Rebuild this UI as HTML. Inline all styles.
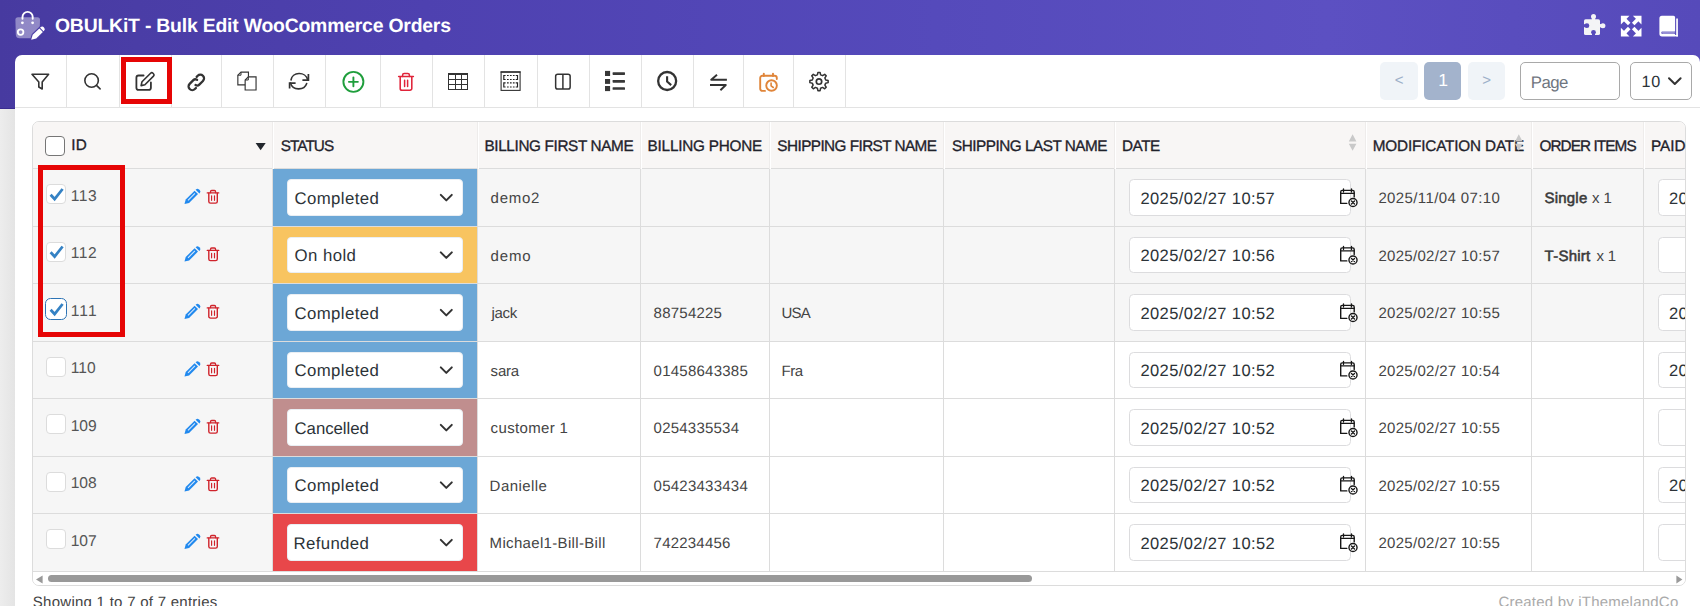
<!DOCTYPE html><html lang="en"><head><meta charset="utf-8"><title>OBULKiT - Bulk Edit WooCommerce Orders</title><style>
*{box-sizing:border-box;margin:0;padding:0}
html,body{width:1700px;height:606px;overflow:hidden}
body{position:relative;background:linear-gradient(90deg,#ededed 0,#e4e4e4 15px);font-family:"Liberation Sans",sans-serif}
.hdr{position:absolute;left:0;top:0;width:1700px;height:109px;background:linear-gradient(90deg,#473aa0 0%,#4a3da6 8%,#4e41b0 25%,#554abb 55%,#5c50c2 78%,#564aba 100%);box-shadow:inset 0 -1px 0 rgba(40,25,120,.4)}
.panel{position:absolute;left:15px;top:55px;width:1685px;height:551px;background:#fff;border-radius:7px 7px 0 0}
.tbar{position:absolute;left:0;top:0;width:1685px;height:53px;border-bottom:1px solid #e3e3e3}
.sep{position:absolute;top:0;width:1px;height:52px;background:#e3e3e3}
.ic{position:absolute;overflow:visible}
.tx{position:absolute;white-space:nowrap;line-height:20px;text-rendering:geometricPrecision}
.redbox{position:absolute;border:5px solid #e60505;box-sizing:content-box}
.pg{position:absolute;top:62px;width:38px;height:38px;border-radius:5px}
.inp{position:absolute;border:1px solid #a9a9a9;border-radius:5px;background:#fff;box-sizing:content-box}
.tbl{position:absolute;border:1px solid #dcdcdc;border-radius:7px;overflow:hidden;box-sizing:content-box;background:#fff}
.tbl>*,.row>*{position:absolute}
.thead{background:#f8f6f5}
.row{left:0;width:100%}
.idc{top:0;background:#f6f6f6}
.stc{top:0}
.sel{position:absolute;left:14px;top:calc(50% - 18.25px);width:176px;height:36.5px;background:#fff;border-radius:4px;border:1px solid #e9eef3}
.dinp{top:calc(50% - 18.1px);width:222px;height:36.2px;background:#fff;border:1px solid #dcdcde;border-radius:4.5px}
.hl{left:0;width:100%;height:1px;background:#dcdcdc}
.vl{width:1px;background:#dcdcdc}
.vh{width:2px;background:linear-gradient(90deg,#eeeceb 50%,#fff 50%);z-index:1}
.sbar{left:0;width:100%;background:#fff}
.thumb{position:absolute;left:15px;top:3px;width:984px;height:7px;border-radius:3.5px;background:#999}
.hcb{position:absolute;width:20px;height:20px;border:1px solid #767676;border-radius:4px;background:#fff}
.cb{position:absolute;width:20px;height:20px;border:1px solid #dcdcdc;border-radius:4px;background:#fff}
.cb.foc{width:22px;height:22px;border:1.5px solid #2d74b5;border-radius:5.5px}
.clipr{overflow:hidden}
</style></head><body>
<div class="hdr">
<svg class="ic" style="left:13px;top:8px" width="34" height="35" viewBox="13 8 34 35" ><path d="M15.4 19.8 a2.6 2.6 0 0 1 2.6 -2.6 H37.4 a2.6 2.6 0 0 1 2.6 2.6 L39.6 34.6 a3.6 3.6 0 0 1 -3.6 3.6 H19.4 a3.6 3.6 0 0 1 -3.6 -3.6 Z" fill="#fff" fill-opacity=".4"/><path d="M22.5 18.8 V17 a5.1 5.1 0 0 1 10.2 0 V18.8" fill="none" stroke="#fff" stroke-width="1.9" stroke-linecap="round"/><circle cx="22.4" cy="22.8" r="1.4" fill="#fff"/><circle cx="32.6" cy="22.8" r="1.4" fill="#fff"/><circle cx="20.6" cy="32.1" r="2.8" fill="none" stroke="#fff" stroke-width="1.8"/><path d="M31.2 39.8 L32.69 34.87 L40.45 27.35 A2.5 2.5 0 0 1 43.93 30.95 L36.17 38.47 Z" fill="#4a3ca4" stroke="#4a3ca4" stroke-width="2.2" stroke-linejoin="round"/><path d="M31.2 39.8 L32.69 34.87 L39.37 28.40 L42.85 32.00 L36.17 38.47 Z" fill="#fff"/><path d="M40.09 27.70 L40.45 27.35 A2.5 2.5 0 0 1 43.93 30.95 L43.57 31.30 Z" fill="#fff"/></svg>
<svg class="ic" style="left:1581px;top:11px" width="27" height="27" viewBox="1581 11 27 27" ><g fill="#f4f4f6"><rect x="1584" y="19.2" width="16" height="15.8" rx="1.6"/><circle cx="1593.5" cy="16.4" r="2.5"/><rect x="1591.9" y="16.4" width="3.2" height="4"/><circle cx="1602.9" cy="25.7" r="2.5"/><rect x="1599" y="24.1" width="4" height="3.2"/></g><g fill="#574bbb"><circle cx="1586.9" cy="25.7" r="2.4"/><rect x="1583" y="24.2" width="3.9" height="3"/><circle cx="1593.5" cy="32.3" r="2.4"/><rect x="1592" y="32.3" width="3" height="3.5"/></g></svg>
<svg class="ic" style="left:1618px;top:13px" width="26" height="26" viewBox="1618 13 26 26" ><path d="M1620.9 15.8 h8.6 l-8.6 8.6 Z" fill="#fff"/><path d="M1623.9 18.8 L1629.20 24.10" stroke="#fff" stroke-width="3.6" fill="none"/><path d="M1641.5 15.8 h-8.6 l8.6 8.6 Z" fill="#fff"/><path d="M1638.5 18.8 L1633.20 24.10" stroke="#fff" stroke-width="3.6" fill="none"/><path d="M1620.9 36.4 h8.6 l-8.6 -8.6 Z" fill="#fff"/><path d="M1623.9 33.4 L1629.20 28.10" stroke="#fff" stroke-width="3.6" fill="none"/><path d="M1641.5 36.4 h-8.6 l8.6 -8.6 Z" fill="#fff"/><path d="M1638.5 33.4 L1633.20 28.10" stroke="#fff" stroke-width="3.6" fill="none"/></svg>
<svg class="ic" style="left:1657px;top:13px" width="24" height="26" viewBox="1657 13 24 26" ><path d="M1661.9 15.7 H1673.5 a1.6 1.6 0 0 1 1.6 1.6 V31.4 H1662.6 a1.3 1.3 0 0 0 0 2.6 H1675.1 V36.4 H1662 a2.6 2.6 0 0 1 -2.6 -2.6 V18.2 a2.5 2.5 0 0 1 2.5 -2.5 Z" fill="#fff"/><rect x="1662" y="31.6" width="13" height="2.3" rx="1.1" fill="#fff" fill-opacity=".38"/><path d="M1677.05 18.4 V36.4" fill="none" stroke="#fff" stroke-width="1.7"/><rect x="1675" y="35" width="2.9" height="1.4" fill="#fff"/></svg>
</div>
<div class="panel">
<div class="tbar">
<i class="sep" style="left:51px"></i>
<i class="sep" style="left:104px"></i>
<i class="sep" style="left:156px"></i>
<i class="sep" style="left:206px"></i>
<i class="sep" style="left:258px"></i>
<i class="sep" style="left:310px"></i>
<i class="sep" style="left:365px"></i>
<i class="sep" style="left:417px"></i>
<i class="sep" style="left:469px"></i>
<i class="sep" style="left:522px"></i>
<i class="sep" style="left:574px"></i>
<i class="sep" style="left:626px"></i>
<i class="sep" style="left:678px"></i>
<i class="sep" style="left:728px"></i>
<i class="sep" style="left:778px"></i>
<i class="sep" style="left:830px"></i>
</div>
</div>
<svg class="ic" style="left:29px;top:71px" width="23" height="21" viewBox="29 71 23 21" ><path d="M32 74.3 H48.6 L42.2 82 V89 L38.8 87 V82 Z" fill="none" stroke="#333" stroke-width="1.6" stroke-linecap="round" stroke-linejoin="round" /></svg>
<svg class="ic" style="left:82px;top:71px" width="21" height="21" viewBox="82 71 21 21" ><circle cx="91.6" cy="80.5" r="6.75" fill="none" stroke="#333" stroke-width="1.6"/><path d="M96.5 85.4 L100.1 88.9" fill="none" stroke="#333" stroke-width="1.6" stroke-linecap="round" stroke-linejoin="round" /></svg>
<svg class="ic" style="left:133px;top:70px" width="24" height="23" viewBox="133 70 24 23" ><path d="M143.6 75.5 H138.6 a2.2 2.2 0 0 0 -2.2 2.2 V87.7 a2.2 2.2 0 0 0 2.2 2.2 H148.7 a2.2 2.2 0 0 0 2.2 -2.2 V82.4" fill="none" stroke="#333" stroke-width="1.8" stroke-linecap="round" stroke-linejoin="round" /><path d="M142 81.8 L150.6 73.2 a1.7 1.7 0 0 1 2.4 0 l0.5 .5 a1.7 1.7 0 0 1 0 2.4 L144.9 84.7 L141.1 85.6 Z" fill="none" stroke="#333" stroke-width="1.6" stroke-linecap="round" stroke-linejoin="round" /></svg>
<svg class="ic" style="left:185px;top:71px" width="23" height="23" viewBox="185 71 23 23" ><g transform="translate(196.3 82.4) rotate(-45)" fill="none" stroke="#333" stroke-width="2.3" stroke-linecap="round"><path d="M2.4 -1.3 Q1.8 -3.7 -0.5 -3.7 H-5.7 A3.7 3.7 0 0 0 -5.7 3.7 H-4.2"/><path d="M2.4 -1.3 Q1.8 -3.7 -0.5 -3.7 H-5.7 A3.7 3.7 0 0 0 -5.7 3.7 H-4.2" transform="rotate(180)"/></g></svg>
<svg class="ic" style="left:234px;top:69px" width="25" height="24" viewBox="234 69 25 24" ><path d="M241 72.05 H248.45 V84.85 H237.85 V75.2 Z" fill="#fff" stroke="#333" stroke-width="1.15" stroke-linejoin="miter"/><path d="M237.85 75.2 H241 V72.05" fill="none" stroke="#333" stroke-width="1"/><path d="M248.3 76.85 H256.05 V89.95 H245.15 V80 Z" fill="#fff" stroke="#333" stroke-width="1.15" stroke-linejoin="miter"/><path d="M245.15 80 H248.3 V76.85" fill="none" stroke="#333" stroke-width="1"/></svg>
<svg class="ic" style="left:287px;top:71px" width="25" height="21" viewBox="287 71 25 21" ><path d="M291 80 A8.4 7.6 0 0 1 307.5 79.4" fill="none" stroke="#333" stroke-width="1.6" stroke-linecap="round" stroke-linejoin="round" /><path d="M308.4 74 V80.1 H302.4" fill="none" stroke="#333" stroke-width="1.7" stroke-linejoin="miter"/><path d="M306.7 83.5 A8.4 7.6 0 0 1 290.5 83.1" fill="none" stroke="#333" stroke-width="1.6" stroke-linecap="round" stroke-linejoin="round" /><path d="M289.6 88.6 V83.1 H295.6" fill="none" stroke="#333" stroke-width="1.7" stroke-linejoin="miter"/></svg>
<svg class="ic" style="left:340px;top:69px" width="27" height="26" viewBox="340 69 27 26" ><circle cx="353.4" cy="81.85" r="10" fill="none" stroke="#1f9e3c" stroke-width="1.9"/><path d="M348.9 81.85 H357.9 M353.4 77.35 V86.35" fill="none" stroke="#1f9e3c" stroke-width="1.9" stroke-linecap="round" stroke-linejoin="round" /></svg>
<svg class="ic" style="left:396px;top:70px" width="20" height="23" viewBox="396 70 20 23" ><path d="M398.6 76.6 H413.4" fill="none" stroke="#e0243a" stroke-width="1.5" stroke-linecap="round" stroke-linejoin="round" /><path d="M402.6 76.4 V75 a1.6 1.6 0 0 1 1.6 -1.6 H407.8 a1.6 1.6 0 0 1 1.6 1.6 V76.4" fill="none" stroke="#e0243a" stroke-width="1.5" stroke-linecap="round" stroke-linejoin="round" /><path d="M400.2 76.8 V88.4 a1.8 1.8 0 0 0 1.8 1.8 H410 a1.8 1.8 0 0 0 1.8 -1.8 V76.8" fill="none" stroke="#e0243a" stroke-width="1.55" stroke-linecap="round" stroke-linejoin="round" /><path d="M404.6 80.2 V86.6 M407.6 80.2 V86.6" fill="none" stroke="#e0243a" stroke-width="1.5" stroke-linecap="round" stroke-linejoin="round" /></svg>
<svg class="ic" style="left:446px;top:70px" width="25" height="22" viewBox="446 70 25 22" ><g fill="#333" shape-rendering="crispEdges"><rect x="448" y="73" width="20" height="2"/><rect x="448" y="73" width="1" height="17"/><rect x="467" y="73" width="1" height="17"/><rect x="455" y="75" width="1" height="15"/><rect x="461" y="75" width="1" height="15"/><rect x="448" y="79" width="20" height="1"/><rect x="448" y="84" width="20" height="1"/><rect x="448" y="89" width="20" height="1"/></g></svg>
<svg class="ic" style="left:498px;top:69px" width="25" height="24" viewBox="498 69 25 24" ><rect x="501.1" y="72" width="19" height="18.4" fill="none" stroke="#333" stroke-width="1.1"/><path d="M500.6 72 H520.6" stroke="#333" stroke-width="1.5"/><g fill="none" stroke="#222" stroke-width="1.15"><path d="M505.6 75.5 H503.8 V79.5 H505.6 M515.7 75.5 H517.5 V79.5 H515.7"/><path d="M507.0 75.5 H514.6 M507.0 79.5 H514.6" stroke-dasharray="1.7 1.25"/><path d="M505.6 82.8 H503.8 V87.0 H505.6 M515.7 82.8 H517.5 V87.0 H515.7"/><path d="M507.0 82.8 H514.6 M507.0 87.0 H514.6" stroke-dasharray="1.7 1.25"/></g></svg>
<svg class="ic" style="left:552px;top:71px" width="21" height="21" viewBox="552 71 21 21" ><rect x="555.65" y="74.15" width="14.5" height="14.9" rx="2.1" fill="none" stroke="#333" stroke-width="1.5"/><path d="M562.9 74.2 V89" stroke="#333" stroke-width="1.5"/></svg>
<svg class="ic" style="left:602px;top:68px" width="26" height="26" viewBox="602 68 26 26" ><rect x="605" y="70.9" width="5.1" height="5.1" fill="#383838"/><rect x="612.6" y="72.2" width="12.4" height="2.7" rx="0.6" fill="#383838"/><rect x="605" y="79" width="5.1" height="4.9" fill="#383838"/><rect x="612.6" y="80" width="12.4" height="2.7" rx="0.6" fill="#383838"/><rect x="605" y="86" width="5.1" height="5.1" fill="#383838"/><rect x="612.6" y="87.2" width="12.4" height="2.6" rx="0.6" fill="#383838"/></svg>
<svg class="ic" style="left:655px;top:69px" width="24" height="24" viewBox="655 69 24 24" ><circle cx="667.15" cy="81" r="9" fill="none" stroke="#333" stroke-width="2.3"/><path d="M667.1 76.2 V81.5 L671.2 85.1" fill="none" stroke="#333" stroke-width="2.1" stroke-linejoin="miter"/></svg>
<svg class="ic" style="left:707px;top:71px" width="23" height="22" viewBox="707 71 23 22" ><path d="M726.9 79.8 H711.2 L717 74.8 M710 85.05 H725.8 L720.4 90.3" fill="none" stroke="#333" stroke-width="1.9" stroke-linejoin="round" stroke-linecap="butt"/></svg>
<svg class="ic" style="left:756px;top:70px" width="24" height="24" viewBox="756 70 24 24" ><path d="M765 90.9 H762.4 a2.2 2.2 0 0 1 -2.2 -2.2 V78 a2.2 2.2 0 0 1 2.2 -2.2 H774.6 a2.2 2.2 0 0 1 2.2 2.2 V79" fill="none" stroke="#e0853a" stroke-width="1.9" stroke-linecap="round" stroke-linejoin="round" /><path d="M763.8 73.6 V76 M773 73.6 V76" fill="none" stroke="#e0853a" stroke-width="1.9" stroke-linecap="round" stroke-linejoin="round" /><circle cx="771.55" cy="85.5" r="5.3" fill="none" stroke="#e0853a" stroke-width="1.9"/><path d="M771.1 83 V85.9 L773.3 87.5" fill="none" stroke="#e0853a" stroke-width="1.6" stroke-linecap="round" stroke-linejoin="round" /></svg>
<svg class="ic" style="left:807px;top:69px" width="24" height="25" viewBox="807 69 24 25" ><path d="M817.92 72.41 L820.08 72.41 L820.61 74.84 L822.61 75.67 L824.70 74.33 L826.22 75.85 L824.88 77.94 L825.71 79.94 L828.14 80.47 L828.14 82.63 L825.71 83.16 L824.88 85.16 L826.22 87.25 L824.70 88.77 L822.61 87.43 L820.61 88.26 L820.08 90.69 L817.92 90.69 L817.39 88.26 L815.39 87.43 L813.30 88.77 L811.78 87.25 L813.12 85.16 L812.29 83.16 L809.86 82.63 L809.86 80.47 L812.29 79.94 L813.12 77.94 L811.78 75.85 L813.30 74.33 L815.39 75.67 L817.39 74.84 Z" fill="none" stroke="#333" stroke-width="1.5" stroke-linecap="round" stroke-linejoin="round" /><circle cx="819.0" cy="81.55" r="2.7" fill="none" stroke="#333" stroke-width="1.7"/></svg>
<div class="redbox" style="left:121px;top:57px;width:41px;height:37px"></div>
<div class="pg" style="left:1380px;background:#f0f4f8"></div>
<div class="pg" style="left:1424px;width:37px;background:#a3b3cc"></div>
<div class="pg" style="left:1468px;width:37px;background:#f0f4f8"></div>
<div class="inp" style="left:1520px;top:62px;width:98px;height:36px"></div>
<div class="inp" style="left:1630px;top:62px;width:60px;height:36px"></div>
<svg class="ic" style="left:1666px;top:75px" width="18" height="12" viewBox="1666 75 18 12" ><path d="M1669 78.3 L1674.8 84 L1680.6 78.3" fill="none" stroke="#333" stroke-width="2" stroke-linecap="round" stroke-linejoin="round"/></svg>
<div class="tbl" style="left:32px;top:121px;width:1652px;height:463px">
<div class="thead" style="left:0;top:0;width:1652px;height:46px"></div>
<div class="row" style="top:47px;height:57px;background:#f6f6f6">
<div class="idc" style="left:0;width:239px;height:57px"></div>
<div class="stc" style="left:240px;width:204px;height:57px;background:#6ca7d6"><div class="sel"></div></div>
<div class="dinp" style="left:1096px"></div>
<div class="dinp" style="left:1625px;width:60px"></div>
</div>
<div class="row" style="top:105px;height:56px;background:#f6f6f6">
<div class="idc" style="left:0;width:239px;height:56px"></div>
<div class="stc" style="left:240px;width:204px;height:56px;background:#f8c460"><div class="sel"></div></div>
<div class="dinp" style="left:1096px"></div>
<div class="dinp" style="left:1625px;width:60px"></div>
</div>
<div class="row" style="top:162px;height:57px;background:#f6f6f6">
<div class="idc" style="left:0;width:239px;height:57px"></div>
<div class="stc" style="left:240px;width:204px;height:57px;background:#6ca7d6"><div class="sel"></div></div>
<div class="dinp" style="left:1096px"></div>
<div class="dinp" style="left:1625px;width:60px"></div>
</div>
<div class="row" style="top:220px;height:56px;background:#fff">
<div class="idc" style="left:0;width:239px;height:56px"></div>
<div class="stc" style="left:240px;width:204px;height:56px;background:#6ca7d6"><div class="sel"></div></div>
<div class="dinp" style="left:1096px"></div>
<div class="dinp" style="left:1625px;width:60px"></div>
</div>
<div class="row" style="top:277px;height:57px;background:#fff">
<div class="idc" style="left:0;width:239px;height:57px"></div>
<div class="stc" style="left:240px;width:204px;height:57px;background:#c08e8e"><div class="sel"></div></div>
<div class="dinp" style="left:1096px"></div>
<div class="dinp" style="left:1625px;width:60px"></div>
</div>
<div class="row" style="top:335px;height:56px;background:#fff">
<div class="idc" style="left:0;width:239px;height:56px"></div>
<div class="stc" style="left:240px;width:204px;height:56px;background:#6ca7d6"><div class="sel"></div></div>
<div class="dinp" style="left:1096px"></div>
<div class="dinp" style="left:1625px;width:60px"></div>
</div>
<div class="row" style="top:392px;height:57px;background:#fff">
<div class="idc" style="left:0;width:239px;height:57px"></div>
<div class="stc" style="left:240px;width:204px;height:57px;background:#e8474a"><div class="sel"></div></div>
<div class="dinp" style="left:1096px"></div>
<div class="dinp" style="left:1625px;width:60px"></div>
</div>
<i class="hl" style="top:46px"></i>
<i class="hl" style="top:104px"></i>
<i class="hl" style="top:161px"></i>
<i class="hl" style="top:219px"></i>
<i class="hl" style="top:276px"></i>
<i class="hl" style="top:334px"></i>
<i class="hl" style="top:391px"></i>
<i class="hl" style="top:449px"></i>
<i class="vl" style="left:239px;top:46px;height:403px"></i>
<i class="vl vh" style="left:239px;top:0;height:47px"></i>
<i class="vl" style="left:444px;top:46px;height:403px"></i>
<i class="vl vh" style="left:444px;top:0;height:47px"></i>
<i class="vl" style="left:607px;top:46px;height:403px"></i>
<i class="vl vh" style="left:607px;top:0;height:47px"></i>
<i class="vl" style="left:736px;top:46px;height:403px"></i>
<i class="vl vh" style="left:736px;top:0;height:47px"></i>
<i class="vl" style="left:910px;top:46px;height:403px"></i>
<i class="vl vh" style="left:910px;top:0;height:47px"></i>
<i class="vl" style="left:1081px;top:46px;height:403px"></i>
<i class="vl vh" style="left:1081px;top:0;height:47px"></i>
<i class="vl" style="left:1332px;top:46px;height:403px"></i>
<i class="vl vh" style="left:1332px;top:0;height:47px"></i>
<i class="vl" style="left:1498px;top:46px;height:403px"></i>
<i class="vl vh" style="left:1498px;top:0;height:47px"></i>
<i class="vl" style="left:1610px;top:46px;height:403px"></i>
<i class="vl vh" style="left:1610px;top:0;height:47px"></i>
<div class="sbar" style="top:450px;height:13px"><div class="thumb"></div><svg style="position:absolute;left:3px;top:3px" width="8" height="9" viewBox="0 0 8 9"><path d="M0 4.5 L6.6 0.4 V8.6 Z" fill="#999"/></svg><svg style="position:absolute;left:1643px;top:3px" width="8" height="9" viewBox="0 0 8 9"><path d="M6.4 4.5 L0.4 0.6 V8.4 Z" fill="#9a9a9a"/></svg></div>
</div>
<div class="hcb" style="left:45px;top:136px"></div>
<svg class="ic" style="left:253px;top:140px" width="15" height="13" viewBox="253 140 15 13" ><path d="M255.6 143 H265.7 L260.65 150.2 Z" fill="#22262c"/></svg>
<svg class="ic" style="left:1346px;top:132px;z-index:3" width="13" height="21" viewBox="1346 132 13 21" ><path d="M1348.8 141.6 L1352.6 134.2 L1356.3999999999999 141.6 Z M1348.8 143.8 L1352.6 150.8 L1356.3999999999999 143.8 Z" fill="#c9c9c9"/></svg>
<svg class="ic" style="left:1513px;top:132px;z-index:3" width="12" height="21" viewBox="1513 132 12 21" ><path d="M1515 141.6 L1518.8 134.2 L1522.6 141.6 Z M1515 143.8 L1518.8 150.8 L1522.6 143.8 Z" fill="#c9c9c9"/></svg>
<div class="cb" style="left:46px;top:184px"></div>
<svg class="ic" style="left:47px;top:185px" width="19" height="19" viewBox="47 185 19 19" ><path d="M50.6 194.8 L54.6 199.0 L62.6 189.0" fill="none" stroke="#3582c4" stroke-width="2.8" stroke-linejoin="miter"/></svg>
<svg class="ic" style="left:182px;top:186px" width="21" height="21" viewBox="182 186 21 21" ><path d="M184.5 204.0 L185.7 199.6 L194.6 190.7 L198 194.1 L189.1 203.0 Z" fill="#2189ee"/><path d="M188 200.3 L194.9 193.4" stroke="#d6e8fc" stroke-width="1.1" fill="none"/><path d="M195.6 189.7 l0.3 -0.3 a2.2 2.2 0 0 1 3.1 0 l0.7 0.7 a2.2 2.2 0 0 1 0 3.1 l-0.3 .3 Z" fill="#2189ee"/></svg>
<svg class="ic" style="left:205px;top:187px" width="17" height="20" viewBox="205 187 17 20" ><path d="M207.3 192.9 H218.7" fill="none" stroke="#cf232b" stroke-width="1.4" stroke-linecap="round" stroke-linejoin="round" /><path d="M210.5 192.7 V191.7 a1.2 1.2 0 0 1 1.2 -1.2 H214.4 a1.2 1.2 0 0 1 1.2 1.2 V192.7" fill="none" stroke="#cf232b" stroke-width="1.3" stroke-linecap="round" stroke-linejoin="round" /><path d="M208.8 193.1 V201.4 a1.7 1.7 0 0 0 1.7 1.7 H215.6 a1.7 1.7 0 0 0 1.7 -1.7 V193.1" fill="none" stroke="#cf232b" stroke-width="1.4" stroke-linecap="round" stroke-linejoin="round" /><path d="M211.6 195.7 V200.3 M214.5 195.7 V200.3" fill="none" stroke="#cf232b" stroke-width="1.15" stroke-linecap="round" stroke-linejoin="round" /></svg>
<svg class="ic" style="left:438px;top:191px" width="17" height="14" viewBox="438 191 17 14" ><path d="M440.8 194.9 L446.3 200.4 L451.8 194.9" fill="none" stroke="#333" stroke-width="2" stroke-linecap="round" stroke-linejoin="round"/></svg>
<svg class="ic" style="left:1338px;top:185px" width="22" height="25" viewBox="1338 185 22 25" ><path d="M1346.8 203.4 H1340.7 V191.9 a1.5 1.5 0 0 1 1.5 -1.5 H1352.7 a1.5 1.5 0 0 1 1.5 1.5 V196.9" fill="none" stroke="#161616" stroke-width="1.4" stroke-linecap="round" stroke-linejoin="round" /><path d="M1340.7 193.4 H1354.2" fill="none" stroke="#161616" stroke-width="1.3" stroke-linecap="round" stroke-linejoin="round" /><path d="M1343.5 188.8 V192.1 M1351.5 188.8 V192.1" fill="none" stroke="#161616" stroke-width="1.3" stroke-linecap="round" stroke-linejoin="round" /><circle cx="1353" cy="202.5" r="4.05" fill="#fff" fill-opacity=".6" stroke="#161616" stroke-width="1.4"/><path d="M1351.5 201.0 L1354.5 204.0 M1354.5 201.0 L1351.5 204.0" fill="none" stroke="#161616" stroke-width="1.3" stroke-linecap="round" stroke-linejoin="round" /></svg>
<div class="cb" style="left:46px;top:242px"></div>
<svg class="ic" style="left:47px;top:242px" width="19" height="19" viewBox="47 242 19 19" ><path d="M50.6 252.3 L54.6 256.5 L62.6 246.5" fill="none" stroke="#3582c4" stroke-width="2.8" stroke-linejoin="miter"/></svg>
<svg class="ic" style="left:182px;top:244px" width="21" height="20" viewBox="182 244 21 20" ><path d="M184.5 261.5 L185.7 257.1 L194.6 248.2 L198 251.6 L189.1 260.5 Z" fill="#2189ee"/><path d="M188 257.8 L194.9 250.9" stroke="#d6e8fc" stroke-width="1.1" fill="none"/><path d="M195.6 247.2 l0.3 -0.3 a2.2 2.2 0 0 1 3.1 0 l0.7 0.7 a2.2 2.2 0 0 1 0 3.1 l-0.3 .3 Z" fill="#2189ee"/></svg>
<svg class="ic" style="left:205px;top:245px" width="17" height="19" viewBox="205 245 17 19" ><path d="M207.3 250.4 H218.7" fill="none" stroke="#cf232b" stroke-width="1.4" stroke-linecap="round" stroke-linejoin="round" /><path d="M210.5 250.2 V249.2 a1.2 1.2 0 0 1 1.2 -1.2 H214.4 a1.2 1.2 0 0 1 1.2 1.2 V250.2" fill="none" stroke="#cf232b" stroke-width="1.3" stroke-linecap="round" stroke-linejoin="round" /><path d="M208.8 250.6 V258.9 a1.7 1.7 0 0 0 1.7 1.7 H215.6 a1.7 1.7 0 0 0 1.7 -1.7 V250.6" fill="none" stroke="#cf232b" stroke-width="1.4" stroke-linecap="round" stroke-linejoin="round" /><path d="M211.6 253.2 V257.8 M214.5 253.2 V257.8" fill="none" stroke="#cf232b" stroke-width="1.15" stroke-linecap="round" stroke-linejoin="round" /></svg>
<svg class="ic" style="left:438px;top:249px" width="17" height="13" viewBox="438 249 17 13" ><path d="M440.8 252.4 L446.3 257.9 L451.8 252.4" fill="none" stroke="#333" stroke-width="2" stroke-linecap="round" stroke-linejoin="round"/></svg>
<svg class="ic" style="left:1338px;top:243px" width="22" height="24" viewBox="1338 243 22 24" ><path d="M1346.8 260.9 H1340.7 V249.4 a1.5 1.5 0 0 1 1.5 -1.5 H1352.7 a1.5 1.5 0 0 1 1.5 1.5 V254.4" fill="none" stroke="#161616" stroke-width="1.4" stroke-linecap="round" stroke-linejoin="round" /><path d="M1340.7 250.9 H1354.2" fill="none" stroke="#161616" stroke-width="1.3" stroke-linecap="round" stroke-linejoin="round" /><path d="M1343.5 246.3 V249.6 M1351.5 246.3 V249.6" fill="none" stroke="#161616" stroke-width="1.3" stroke-linecap="round" stroke-linejoin="round" /><circle cx="1353" cy="260.0" r="4.05" fill="#fff" fill-opacity=".6" stroke="#161616" stroke-width="1.4"/><path d="M1351.5 258.5 L1354.5 261.5 M1354.5 258.5 L1351.5 261.5" fill="none" stroke="#161616" stroke-width="1.3" stroke-linecap="round" stroke-linejoin="round" /></svg>
<div class="cb foc" style="left:45px;top:298px"></div>
<svg class="ic" style="left:47px;top:300px" width="19" height="19" viewBox="47 300 19 19" ><path d="M50.6 309.8 L54.6 314.0 L62.6 304.0" fill="none" stroke="#3582c4" stroke-width="2.8" stroke-linejoin="miter"/></svg>
<svg class="ic" style="left:182px;top:301px" width="21" height="21" viewBox="182 301 21 21" ><path d="M184.5 319.0 L185.7 314.6 L194.6 305.7 L198 309.1 L189.1 318.0 Z" fill="#2189ee"/><path d="M188 315.3 L194.9 308.4" stroke="#d6e8fc" stroke-width="1.1" fill="none"/><path d="M195.6 304.7 l0.3 -0.3 a2.2 2.2 0 0 1 3.1 0 l0.7 0.7 a2.2 2.2 0 0 1 0 3.1 l-0.3 .3 Z" fill="#2189ee"/></svg>
<svg class="ic" style="left:205px;top:302px" width="17" height="20" viewBox="205 302 17 20" ><path d="M207.3 307.9 H218.7" fill="none" stroke="#cf232b" stroke-width="1.4" stroke-linecap="round" stroke-linejoin="round" /><path d="M210.5 307.7 V306.7 a1.2 1.2 0 0 1 1.2 -1.2 H214.4 a1.2 1.2 0 0 1 1.2 1.2 V307.7" fill="none" stroke="#cf232b" stroke-width="1.3" stroke-linecap="round" stroke-linejoin="round" /><path d="M208.8 308.1 V316.4 a1.7 1.7 0 0 0 1.7 1.7 H215.6 a1.7 1.7 0 0 0 1.7 -1.7 V308.1" fill="none" stroke="#cf232b" stroke-width="1.4" stroke-linecap="round" stroke-linejoin="round" /><path d="M211.6 310.7 V315.3 M214.5 310.7 V315.3" fill="none" stroke="#cf232b" stroke-width="1.15" stroke-linecap="round" stroke-linejoin="round" /></svg>
<svg class="ic" style="left:438px;top:306px" width="17" height="14" viewBox="438 306 17 14" ><path d="M440.8 309.9 L446.3 315.4 L451.8 309.9" fill="none" stroke="#333" stroke-width="2" stroke-linecap="round" stroke-linejoin="round"/></svg>
<svg class="ic" style="left:1338px;top:300px" width="22" height="25" viewBox="1338 300 22 25" ><path d="M1346.8 318.4 H1340.7 V306.9 a1.5 1.5 0 0 1 1.5 -1.5 H1352.7 a1.5 1.5 0 0 1 1.5 1.5 V311.9" fill="none" stroke="#161616" stroke-width="1.4" stroke-linecap="round" stroke-linejoin="round" /><path d="M1340.7 308.4 H1354.2" fill="none" stroke="#161616" stroke-width="1.3" stroke-linecap="round" stroke-linejoin="round" /><path d="M1343.5 303.8 V307.1 M1351.5 303.8 V307.1" fill="none" stroke="#161616" stroke-width="1.3" stroke-linecap="round" stroke-linejoin="round" /><circle cx="1353" cy="317.5" r="4.05" fill="#fff" fill-opacity=".6" stroke="#161616" stroke-width="1.4"/><path d="M1351.5 316.0 L1354.5 319.0 M1354.5 316.0 L1351.5 319.0" fill="none" stroke="#161616" stroke-width="1.3" stroke-linecap="round" stroke-linejoin="round" /></svg>
<div class="cb" style="left:46px;top:357px"></div>
<svg class="ic" style="left:182px;top:359px" width="21" height="20" viewBox="182 359 21 20" ><path d="M184.5 376.5 L185.7 372.1 L194.6 363.2 L198 366.6 L189.1 375.5 Z" fill="#2189ee"/><path d="M188 372.8 L194.9 365.9" stroke="#d6e8fc" stroke-width="1.1" fill="none"/><path d="M195.6 362.2 l0.3 -0.3 a2.2 2.2 0 0 1 3.1 0 l0.7 0.7 a2.2 2.2 0 0 1 0 3.1 l-0.3 .3 Z" fill="#2189ee"/></svg>
<svg class="ic" style="left:205px;top:360px" width="17" height="19" viewBox="205 360 17 19" ><path d="M207.3 365.4 H218.7" fill="none" stroke="#cf232b" stroke-width="1.4" stroke-linecap="round" stroke-linejoin="round" /><path d="M210.5 365.2 V364.2 a1.2 1.2 0 0 1 1.2 -1.2 H214.4 a1.2 1.2 0 0 1 1.2 1.2 V365.2" fill="none" stroke="#cf232b" stroke-width="1.3" stroke-linecap="round" stroke-linejoin="round" /><path d="M208.8 365.6 V373.9 a1.7 1.7 0 0 0 1.7 1.7 H215.6 a1.7 1.7 0 0 0 1.7 -1.7 V365.6" fill="none" stroke="#cf232b" stroke-width="1.4" stroke-linecap="round" stroke-linejoin="round" /><path d="M211.6 368.2 V372.8 M214.5 368.2 V372.8" fill="none" stroke="#cf232b" stroke-width="1.15" stroke-linecap="round" stroke-linejoin="round" /></svg>
<svg class="ic" style="left:438px;top:364px" width="17" height="13" viewBox="438 364 17 13" ><path d="M440.8 367.4 L446.3 372.9 L451.8 367.4" fill="none" stroke="#333" stroke-width="2" stroke-linecap="round" stroke-linejoin="round"/></svg>
<svg class="ic" style="left:1338px;top:358px" width="22" height="24" viewBox="1338 358 22 24" ><path d="M1346.8 375.9 H1340.7 V364.4 a1.5 1.5 0 0 1 1.5 -1.5 H1352.7 a1.5 1.5 0 0 1 1.5 1.5 V369.4" fill="none" stroke="#161616" stroke-width="1.4" stroke-linecap="round" stroke-linejoin="round" /><path d="M1340.7 365.9 H1354.2" fill="none" stroke="#161616" stroke-width="1.3" stroke-linecap="round" stroke-linejoin="round" /><path d="M1343.5 361.3 V364.6 M1351.5 361.3 V364.6" fill="none" stroke="#161616" stroke-width="1.3" stroke-linecap="round" stroke-linejoin="round" /><circle cx="1353" cy="375.0" r="4.05" fill="#fff" fill-opacity=".6" stroke="#161616" stroke-width="1.4"/><path d="M1351.5 373.5 L1354.5 376.5 M1354.5 373.5 L1351.5 376.5" fill="none" stroke="#161616" stroke-width="1.3" stroke-linecap="round" stroke-linejoin="round" /></svg>
<div class="cb" style="left:46px;top:414px"></div>
<svg class="ic" style="left:182px;top:416px" width="21" height="21" viewBox="182 416 21 21" ><path d="M184.5 434.0 L185.7 429.6 L194.6 420.7 L198 424.1 L189.1 433.0 Z" fill="#2189ee"/><path d="M188 430.3 L194.9 423.4" stroke="#d6e8fc" stroke-width="1.1" fill="none"/><path d="M195.6 419.7 l0.3 -0.3 a2.2 2.2 0 0 1 3.1 0 l0.7 0.7 a2.2 2.2 0 0 1 0 3.1 l-0.3 .3 Z" fill="#2189ee"/></svg>
<svg class="ic" style="left:205px;top:417px" width="17" height="20" viewBox="205 417 17 20" ><path d="M207.3 422.9 H218.7" fill="none" stroke="#cf232b" stroke-width="1.4" stroke-linecap="round" stroke-linejoin="round" /><path d="M210.5 422.7 V421.7 a1.2 1.2 0 0 1 1.2 -1.2 H214.4 a1.2 1.2 0 0 1 1.2 1.2 V422.7" fill="none" stroke="#cf232b" stroke-width="1.3" stroke-linecap="round" stroke-linejoin="round" /><path d="M208.8 423.1 V431.4 a1.7 1.7 0 0 0 1.7 1.7 H215.6 a1.7 1.7 0 0 0 1.7 -1.7 V423.1" fill="none" stroke="#cf232b" stroke-width="1.4" stroke-linecap="round" stroke-linejoin="round" /><path d="M211.6 425.7 V430.3 M214.5 425.7 V430.3" fill="none" stroke="#cf232b" stroke-width="1.15" stroke-linecap="round" stroke-linejoin="round" /></svg>
<svg class="ic" style="left:438px;top:421px" width="17" height="14" viewBox="438 421 17 14" ><path d="M440.8 424.9 L446.3 430.4 L451.8 424.9" fill="none" stroke="#333" stroke-width="2" stroke-linecap="round" stroke-linejoin="round"/></svg>
<svg class="ic" style="left:1338px;top:415px" width="22" height="25" viewBox="1338 415 22 25" ><path d="M1346.8 433.4 H1340.7 V421.9 a1.5 1.5 0 0 1 1.5 -1.5 H1352.7 a1.5 1.5 0 0 1 1.5 1.5 V426.9" fill="none" stroke="#161616" stroke-width="1.4" stroke-linecap="round" stroke-linejoin="round" /><path d="M1340.7 423.4 H1354.2" fill="none" stroke="#161616" stroke-width="1.3" stroke-linecap="round" stroke-linejoin="round" /><path d="M1343.5 418.8 V422.1 M1351.5 418.8 V422.1" fill="none" stroke="#161616" stroke-width="1.3" stroke-linecap="round" stroke-linejoin="round" /><circle cx="1353" cy="432.5" r="4.05" fill="#fff" fill-opacity=".6" stroke="#161616" stroke-width="1.4"/><path d="M1351.5 431.0 L1354.5 434.0 M1354.5 431.0 L1351.5 434.0" fill="none" stroke="#161616" stroke-width="1.3" stroke-linecap="round" stroke-linejoin="round" /></svg>
<div class="cb" style="left:46px;top:472px"></div>
<svg class="ic" style="left:182px;top:474px" width="21" height="20" viewBox="182 474 21 20" ><path d="M184.5 491.5 L185.7 487.1 L194.6 478.2 L198 481.6 L189.1 490.5 Z" fill="#2189ee"/><path d="M188 487.8 L194.9 480.9" stroke="#d6e8fc" stroke-width="1.1" fill="none"/><path d="M195.6 477.2 l0.3 -0.3 a2.2 2.2 0 0 1 3.1 0 l0.7 0.7 a2.2 2.2 0 0 1 0 3.1 l-0.3 .3 Z" fill="#2189ee"/></svg>
<svg class="ic" style="left:205px;top:475px" width="17" height="19" viewBox="205 475 17 19" ><path d="M207.3 480.4 H218.7" fill="none" stroke="#cf232b" stroke-width="1.4" stroke-linecap="round" stroke-linejoin="round" /><path d="M210.5 480.2 V479.2 a1.2 1.2 0 0 1 1.2 -1.2 H214.4 a1.2 1.2 0 0 1 1.2 1.2 V480.2" fill="none" stroke="#cf232b" stroke-width="1.3" stroke-linecap="round" stroke-linejoin="round" /><path d="M208.8 480.6 V488.9 a1.7 1.7 0 0 0 1.7 1.7 H215.6 a1.7 1.7 0 0 0 1.7 -1.7 V480.6" fill="none" stroke="#cf232b" stroke-width="1.4" stroke-linecap="round" stroke-linejoin="round" /><path d="M211.6 483.2 V487.8 M214.5 483.2 V487.8" fill="none" stroke="#cf232b" stroke-width="1.15" stroke-linecap="round" stroke-linejoin="round" /></svg>
<svg class="ic" style="left:438px;top:479px" width="17" height="13" viewBox="438 479 17 13" ><path d="M440.8 482.4 L446.3 487.9 L451.8 482.4" fill="none" stroke="#333" stroke-width="2" stroke-linecap="round" stroke-linejoin="round"/></svg>
<svg class="ic" style="left:1338px;top:473px" width="22" height="24" viewBox="1338 473 22 24" ><path d="M1346.8 490.9 H1340.7 V479.4 a1.5 1.5 0 0 1 1.5 -1.5 H1352.7 a1.5 1.5 0 0 1 1.5 1.5 V484.4" fill="none" stroke="#161616" stroke-width="1.4" stroke-linecap="round" stroke-linejoin="round" /><path d="M1340.7 480.9 H1354.2" fill="none" stroke="#161616" stroke-width="1.3" stroke-linecap="round" stroke-linejoin="round" /><path d="M1343.5 476.3 V479.6 M1351.5 476.3 V479.6" fill="none" stroke="#161616" stroke-width="1.3" stroke-linecap="round" stroke-linejoin="round" /><circle cx="1353" cy="490.0" r="4.05" fill="#fff" fill-opacity=".6" stroke="#161616" stroke-width="1.4"/><path d="M1351.5 488.5 L1354.5 491.5 M1354.5 488.5 L1351.5 491.5" fill="none" stroke="#161616" stroke-width="1.3" stroke-linecap="round" stroke-linejoin="round" /></svg>
<div class="cb" style="left:46px;top:529px"></div>
<svg class="ic" style="left:182px;top:531px" width="21" height="21" viewBox="182 531 21 21" ><path d="M184.5 549.0 L185.7 544.6 L194.6 535.7 L198 539.1 L189.1 548.0 Z" fill="#2189ee"/><path d="M188 545.3 L194.9 538.4" stroke="#d6e8fc" stroke-width="1.1" fill="none"/><path d="M195.6 534.7 l0.3 -0.3 a2.2 2.2 0 0 1 3.1 0 l0.7 0.7 a2.2 2.2 0 0 1 0 3.1 l-0.3 .3 Z" fill="#2189ee"/></svg>
<svg class="ic" style="left:205px;top:532px" width="17" height="20" viewBox="205 532 17 20" ><path d="M207.3 537.9 H218.7" fill="none" stroke="#cf232b" stroke-width="1.4" stroke-linecap="round" stroke-linejoin="round" /><path d="M210.5 537.7 V536.7 a1.2 1.2 0 0 1 1.2 -1.2 H214.4 a1.2 1.2 0 0 1 1.2 1.2 V537.7" fill="none" stroke="#cf232b" stroke-width="1.3" stroke-linecap="round" stroke-linejoin="round" /><path d="M208.8 538.1 V546.4 a1.7 1.7 0 0 0 1.7 1.7 H215.6 a1.7 1.7 0 0 0 1.7 -1.7 V538.1" fill="none" stroke="#cf232b" stroke-width="1.4" stroke-linecap="round" stroke-linejoin="round" /><path d="M211.6 540.7 V545.3 M214.5 540.7 V545.3" fill="none" stroke="#cf232b" stroke-width="1.15" stroke-linecap="round" stroke-linejoin="round" /></svg>
<svg class="ic" style="left:438px;top:536px" width="17" height="14" viewBox="438 536 17 14" ><path d="M440.8 539.9 L446.3 545.4 L451.8 539.9" fill="none" stroke="#333" stroke-width="2" stroke-linecap="round" stroke-linejoin="round"/></svg>
<svg class="ic" style="left:1338px;top:530px" width="22" height="25" viewBox="1338 530 22 25" ><path d="M1346.8 548.4 H1340.7 V536.9 a1.5 1.5 0 0 1 1.5 -1.5 H1352.7 a1.5 1.5 0 0 1 1.5 1.5 V541.9" fill="none" stroke="#161616" stroke-width="1.4" stroke-linecap="round" stroke-linejoin="round" /><path d="M1340.7 538.4 H1354.2" fill="none" stroke="#161616" stroke-width="1.3" stroke-linecap="round" stroke-linejoin="round" /><path d="M1343.5 533.8 V537.1 M1351.5 533.8 V537.1" fill="none" stroke="#161616" stroke-width="1.3" stroke-linecap="round" stroke-linejoin="round" /><circle cx="1353" cy="547.5" r="4.05" fill="#fff" fill-opacity=".6" stroke="#161616" stroke-width="1.4"/><path d="M1351.5 546.0 L1354.5 549.0 M1354.5 546.0 L1351.5 549.0" fill="none" stroke="#161616" stroke-width="1.3" stroke-linecap="round" stroke-linejoin="round" /></svg>
<div class="redbox" style="left:38px;top:165px;width:77px;height:162px"></div>
<span class="tx" style="left:55.00px;top:16.10px;font-size:19.4px;color:#fff;font-weight:700;letter-spacing:-0.208px;">OBULKiT - Bulk Edit WooCommerce Orders</span>
<span class="tx" style="left:1394.80px;top:71.10px;font-size:15px;color:#9db0c9;">&lt;</span>
<span class="tx" style="left:1438.20px;top:70.10px;font-size:17.6px;color:#fff;">1</span>
<span class="tx" style="left:1482.30px;top:71.10px;font-size:15px;color:#9db0c9;">&gt;</span>
<span class="tx" style="left:1530.80px;top:73.10px;font-size:16.8px;color:#6f7680;letter-spacing:-0.520px;">Page</span>
<span class="tx" style="left:1641.60px;top:72.10px;font-size:16.2px;color:#2c3338;letter-spacing:0.597px;">10</span>
<span class="tx" style="left:71.20px;top:136.10px;font-size:15.3px;color:#1f222b;letter-spacing:0.350px;-webkit-text-stroke:0.32px currentColor;">ID</span>
<span class="tx" style="left:280.70px;top:137.10px;font-size:15.3px;color:#1f222b;letter-spacing:-0.914px;-webkit-text-stroke:0.32px currentColor;">STATUS</span>
<span class="tx" style="left:484.50px;top:137.10px;font-size:15.3px;color:#1f222b;letter-spacing:-0.363px;-webkit-text-stroke:0.32px currentColor;">BILLING FIRST NAME</span>
<span class="tx" style="left:647.60px;top:137.10px;font-size:15.3px;color:#1f222b;letter-spacing:-0.217px;-webkit-text-stroke:0.32px currentColor;">BILLING PHONE</span>
<span class="tx" style="left:777.30px;top:137.10px;font-size:15.3px;color:#1f222b;letter-spacing:-0.556px;-webkit-text-stroke:0.32px currentColor;">SHIPPING FIRST NAME</span>
<span class="tx" style="left:952.10px;top:137.10px;font-size:15.3px;color:#1f222b;letter-spacing:-0.498px;-webkit-text-stroke:0.32px currentColor;">SHIPPING LAST NAME</span>
<span class="tx" style="left:1122.10px;top:137.10px;font-size:15.3px;color:#1f222b;letter-spacing:-0.519px;-webkit-text-stroke:0.32px currentColor;">DATE</span>
<span class="tx" style="left:1372.70px;top:137.10px;font-size:15.3px;color:#1f222b;letter-spacing:-0.162px;-webkit-text-stroke:0.32px currentColor;">MODIFICATION DATE</span>
<span class="tx" style="left:1539.50px;top:137.10px;font-size:15.3px;color:#1f222b;letter-spacing:-0.913px;-webkit-text-stroke:0.32px currentColor;">ORDER ITEMS</span>
<span class="tx" style="left:1651.10px;top:137.10px;font-size:15.3px;color:#1f222b;letter-spacing:-0.040px;-webkit-text-stroke:0.32px currentColor;">PAID</span>
<span class="tx" style="left:70.70px;top:187.10px;font-size:15.6px;color:#555;letter-spacing:0.506px;">113</span>
<span class="tx" style="left:294.50px;top:189.10px;font-size:16.8px;color:#2c3338;letter-spacing:0.385px;">Completed</span>
<span class="tx" style="left:490.60px;top:189.10px;font-size:15px;color:#444;letter-spacing:0.720px;">demo2</span>
<span class="tx" style="left:1140.50px;top:189.10px;font-size:16.5px;color:#2c3338;letter-spacing:0.381px;">2025/02/27 10:57</span>
<span class="tx" style="left:1378.40px;top:189.10px;font-size:15px;color:#444;letter-spacing:0.379px;">2025/11/04 07:10</span>
<span class="tx" style="left:1544.60px;top:189.10px;font-size:15px;color:#3a3a3a;letter-spacing:0.189px;-webkit-text-stroke:0.55px currentColor;">Single</span>
<span class="tx" style="left:1592.00px;top:189.10px;font-size:15px;color:#444;">x</span>
<span class="tx" style="left:1603.40px;top:189.10px;font-size:15px;color:#444;">1</span>
<span class="tx" style="left:1669.00px;top:189.10px;font-size:16.5px;color:#2c3338;letter-spacing:0.300px;width:16.0px;overflow:hidden;">20</span>
<span class="tx" style="left:70.70px;top:244.10px;font-size:15.6px;color:#555;letter-spacing:0.506px;">112</span>
<span class="tx" style="left:294.50px;top:246.10px;font-size:16.8px;color:#2c3338;letter-spacing:0.443px;">On hold</span>
<span class="tx" style="left:490.60px;top:247.10px;font-size:15px;color:#444;letter-spacing:0.807px;">demo</span>
<span class="tx" style="left:1140.50px;top:246.10px;font-size:16.5px;color:#2c3338;letter-spacing:0.381px;">2025/02/27 10:56</span>
<span class="tx" style="left:1378.40px;top:247.10px;font-size:15px;color:#444;letter-spacing:0.304px;">2025/02/27 10:57</span>
<span class="tx" style="left:1544.60px;top:247.10px;font-size:15px;color:#3a3a3a;letter-spacing:0.233px;-webkit-text-stroke:0.55px currentColor;">T-Shirt</span>
<span class="tx" style="left:1596.40px;top:247.10px;font-size:15px;color:#444;">x</span>
<span class="tx" style="left:1607.80px;top:247.10px;font-size:15px;color:#444;">1</span>
<span class="tx" style="left:70.70px;top:302.10px;font-size:15.6px;color:#555;letter-spacing:1.085px;">111</span>
<span class="tx" style="left:294.50px;top:304.10px;font-size:16.8px;color:#2c3338;letter-spacing:0.385px;">Completed</span>
<span class="tx" style="left:491.60px;top:304.10px;font-size:15px;color:#444;letter-spacing:-0.325px;">jack</span>
<span class="tx" style="left:653.60px;top:304.10px;font-size:15px;color:#444;letter-spacing:0.229px;">88754225</span>
<span class="tx" style="left:781.40px;top:304.10px;font-size:15px;color:#444;letter-spacing:-0.719px;">USA</span>
<span class="tx" style="left:1140.50px;top:304.10px;font-size:16.5px;color:#2c3338;letter-spacing:0.381px;">2025/02/27 10:52</span>
<span class="tx" style="left:1378.40px;top:304.10px;font-size:15px;color:#444;letter-spacing:0.304px;">2025/02/27 10:55</span>
<span class="tx" style="left:1669.00px;top:304.10px;font-size:16.5px;color:#2c3338;letter-spacing:0.300px;width:16.0px;overflow:hidden;">20</span>
<span class="tx" style="left:70.70px;top:359.10px;font-size:15.6px;color:#555;letter-spacing:0.006px;">110</span>
<span class="tx" style="left:294.50px;top:361.10px;font-size:16.8px;color:#2c3338;letter-spacing:0.385px;">Completed</span>
<span class="tx" style="left:490.60px;top:362.10px;font-size:15px;color:#444;letter-spacing:-0.212px;">sara</span>
<span class="tx" style="left:653.60px;top:362.10px;font-size:15px;color:#444;letter-spacing:0.238px;">01458643385</span>
<span class="tx" style="left:781.40px;top:362.10px;font-size:15px;color:#444;letter-spacing:-0.379px;">Fra</span>
<span class="tx" style="left:1140.50px;top:361.10px;font-size:16.5px;color:#2c3338;letter-spacing:0.381px;">2025/02/27 10:52</span>
<span class="tx" style="left:1378.40px;top:362.10px;font-size:15px;color:#444;letter-spacing:0.304px;">2025/02/27 10:54</span>
<span class="tx" style="left:1669.00px;top:361.10px;font-size:16.5px;color:#2c3338;letter-spacing:0.300px;width:16.0px;overflow:hidden;">20</span>
<span class="tx" style="left:70.70px;top:417.10px;font-size:15.6px;color:#555;letter-spacing:-0.073px;">109</span>
<span class="tx" style="left:294.50px;top:419.10px;font-size:16.8px;color:#2c3338;letter-spacing:-0.037px;">Cancelled</span>
<span class="tx" style="left:490.60px;top:419.10px;font-size:15px;color:#444;letter-spacing:0.350px;">customer 1</span>
<span class="tx" style="left:653.60px;top:419.10px;font-size:15px;color:#444;letter-spacing:0.224px;">0254335534</span>
<span class="tx" style="left:1140.50px;top:419.10px;font-size:16.5px;color:#2c3338;letter-spacing:0.381px;">2025/02/27 10:52</span>
<span class="tx" style="left:1378.40px;top:419.10px;font-size:15px;color:#444;letter-spacing:0.304px;">2025/02/27 10:55</span>
<span class="tx" style="left:70.70px;top:474.10px;font-size:15.6px;color:#555;letter-spacing:-0.073px;">108</span>
<span class="tx" style="left:294.50px;top:476.10px;font-size:16.8px;color:#2c3338;letter-spacing:0.385px;">Completed</span>
<span class="tx" style="left:489.60px;top:477.10px;font-size:15px;color:#444;letter-spacing:0.449px;">Danielle</span>
<span class="tx" style="left:653.60px;top:477.10px;font-size:15px;color:#444;letter-spacing:0.238px;">05423433434</span>
<span class="tx" style="left:1140.50px;top:476.10px;font-size:16.5px;color:#2c3338;letter-spacing:0.381px;">2025/02/27 10:52</span>
<span class="tx" style="left:1378.40px;top:477.10px;font-size:15px;color:#444;letter-spacing:0.304px;">2025/02/27 10:55</span>
<span class="tx" style="left:1669.00px;top:476.10px;font-size:16.5px;color:#2c3338;letter-spacing:0.300px;width:16.0px;overflow:hidden;">20</span>
<span class="tx" style="left:70.70px;top:532.10px;font-size:15.6px;color:#555;letter-spacing:-0.073px;">107</span>
<span class="tx" style="left:293.50px;top:534.10px;font-size:16.8px;color:#2c3338;letter-spacing:0.365px;">Refunded</span>
<span class="tx" style="left:489.60px;top:534.10px;font-size:15px;color:#444;letter-spacing:0.330px;">Michael1-Bill-Bill</span>
<span class="tx" style="left:653.60px;top:534.10px;font-size:15px;color:#444;letter-spacing:0.208px;">742234456</span>
<span class="tx" style="left:1140.50px;top:534.10px;font-size:16.5px;color:#2c3338;letter-spacing:0.381px;">2025/02/27 10:52</span>
<span class="tx" style="left:1378.40px;top:534.10px;font-size:15px;color:#444;letter-spacing:0.304px;">2025/02/27 10:55</span>
<span class="tx" style="left:32.80px;top:593.10px;font-size:15px;color:#444;letter-spacing:0.265px;">Showing 1 to 7 of 7 entries</span>
<span class="tx" style="left:1498.40px;top:593.10px;font-size:15px;color:#aaa;letter-spacing:0.216px;">Created by iThemelandCo</span>
</body></html>
